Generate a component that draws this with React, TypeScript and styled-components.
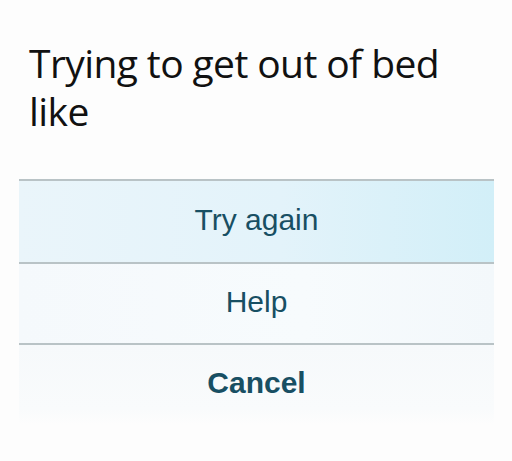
import React from 'react'
import styled, { createGlobalStyle } from 'styled-components'

const GlobalStyle = createGlobalStyle`
  html, body {
    margin: 0;
    padding: 0;
    background: #fdfdfd;
  }
`

const Page = styled.div`
  width: 512px;
  height: 461px;
  padding-top: 39px;
  box-sizing: border-box;
  overflow: hidden;
`

const Title = styled.h1`
  margin: 0 0 44px 29px;
  font-family: 'Open Sans', 'Noto Sans', sans-serif;
  font-weight: 400;
  font-size: 39px;
  line-height: 48px;
  color: #111;
  letter-spacing: -0.6px;
`

const Sheet = styled.div`
  margin: 0 18px 0 19px;
  display: flex;
  flex-direction: column;
  border-top: 2px solid #b9c3c6;
`

const Action = styled.div<{ $height: number; $tint: string; $bold?: boolean; $divider?: boolean }>`
  height: ${p => p.$height}px;
  display: flex;
  align-items: center;
  justify-content: center;
  padding-bottom: 4px;
  box-sizing: border-box;
  background: ${p => p.$tint};
  border-bottom: ${p => (p.$divider ? '2px solid #b9c3c6' : 'none')};
  font-family: 'Liberation Sans', Arial, sans-serif;
  font-size: 30px;
  font-weight: ${p => (p.$bold ? 700 : 400)};
  color: #184f63;
`

export default function App() {
  return (
    <Page>
      <GlobalStyle />
      <Title>
        Trying to get out of bed
        <br />
        like
      </Title>
      <Sheet>
        <Action $height={83} $divider $tint="linear-gradient(90deg, #eaf5fa 0%, #e3f3fa 55%, #d2eff8 100%)">
          Try again
        </Action>
        <Action $height={81} $divider $tint="linear-gradient(90deg, #f5f9fc 0%, #f7fbfd 60%, #f3f8fb 100%)">
          Help
        </Action>
        <Action $height={80} $bold $tint="linear-gradient(180deg, #f6f9fb 0%, #f9fbfc 80%, #fdfdfd 100%)">
          Cancel
        </Action>
      </Sheet>
    </Page>
  )
}
